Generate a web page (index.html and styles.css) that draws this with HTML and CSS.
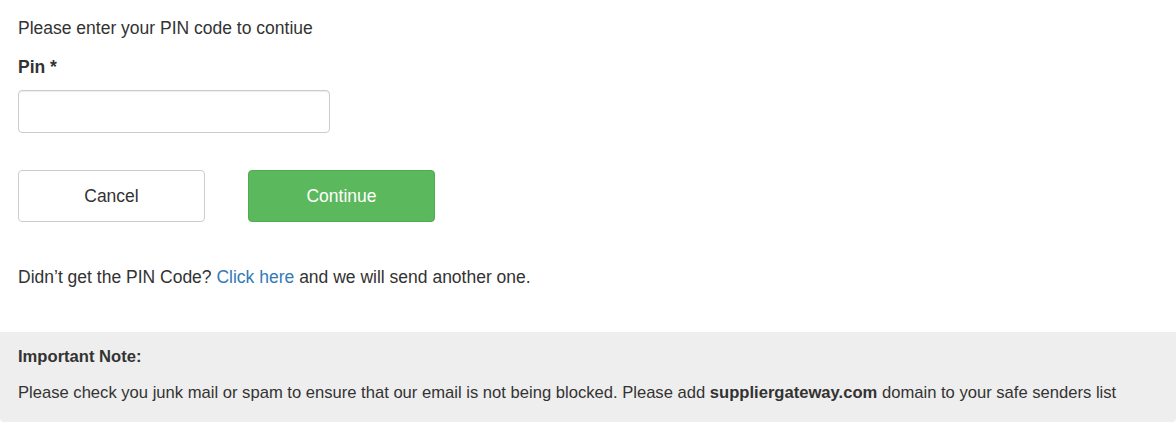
FILE: index.html
```html
<!DOCTYPE html>
<html>
<head>
<meta charset="utf-8">
<link rel="stylesheet" href="styles.css">
</head>
<body>
<div class="page">
  <p class="intro">Please enter your PIN code to contiue</p>
  <label class="field-label" for="pin">Pin *</label>
  <input class="field-input" id="pin" type="text">
  <div class="actions">
    <button class="btn btn-default" type="button">Cancel</button>
    <button class="btn btn-success" type="button">Continue</button>
  </div>
  <p class="resend">Didn’t get the PIN Code? <a class="link" href="#">Click here</a> and we will send another one.</p>
</div>
<div class="note">
  <div class="note-title">Important Note:</div>
  <p class="note-text">Please check you junk mail or spam to ensure that our email is not being blocked. Please add <strong>suppliergateway.com</strong> domain to your safe senders list</p>
</div>
</body>
</html>
```
FILE: styles.css
```css
html, body {
  margin: 0;
  padding: 0;
  background: #fff;
}
body {
  font-family: "Liberation Sans", Arial, sans-serif;
  font-size: 17.5px;
  color: #333;
}
.page {
  padding: 17px 18px 0;
}
.intro {
  margin: 0;
  line-height: 22px;
}
.field-label {
  display: block;
  margin-top: 17px;
  line-height: 22px;
  font-weight: bold;
}
.field-input {
  display: block;
  box-sizing: border-box;
  margin-top: 12px;
  width: 312px;
  height: 43px;
  border: 1px solid #ccc;
  border-radius: 4px;
  box-shadow: inset 0 1px 1px rgba(0,0,0,.075);
  font: inherit;
  padding: 6px 12px;
}
.actions {
  display: flex;
  gap: 43px;
  margin-top: 37px;
}
.btn {
  box-sizing: border-box;
  width: 187px;
  height: 52px;
  border-radius: 4px;
  font: inherit;
  cursor: pointer;
}
.btn-default {
  background: #fff;
  border: 1px solid #ccc;
  color: #333;
}
.btn-success {
  background: #5cb85c;
  border: 1px solid #4cae4c;
  color: #fff;
}
.resend {
  margin: 44px 0 0;
  line-height: 22px;
}
.link {
  color: #337ab7;
  text-decoration: none;
}
.note {
  margin-top: 44px;
  background: #eee;
  border-radius: 0 0 4px 4px;
  padding: 14px 18px 18px;
  font-size: 16.6px;
}
.note-title {
  font-weight: bold;
  line-height: 22px;
}
.note-text {
  margin: 14px 0 0;
  line-height: 22px;
}
```
